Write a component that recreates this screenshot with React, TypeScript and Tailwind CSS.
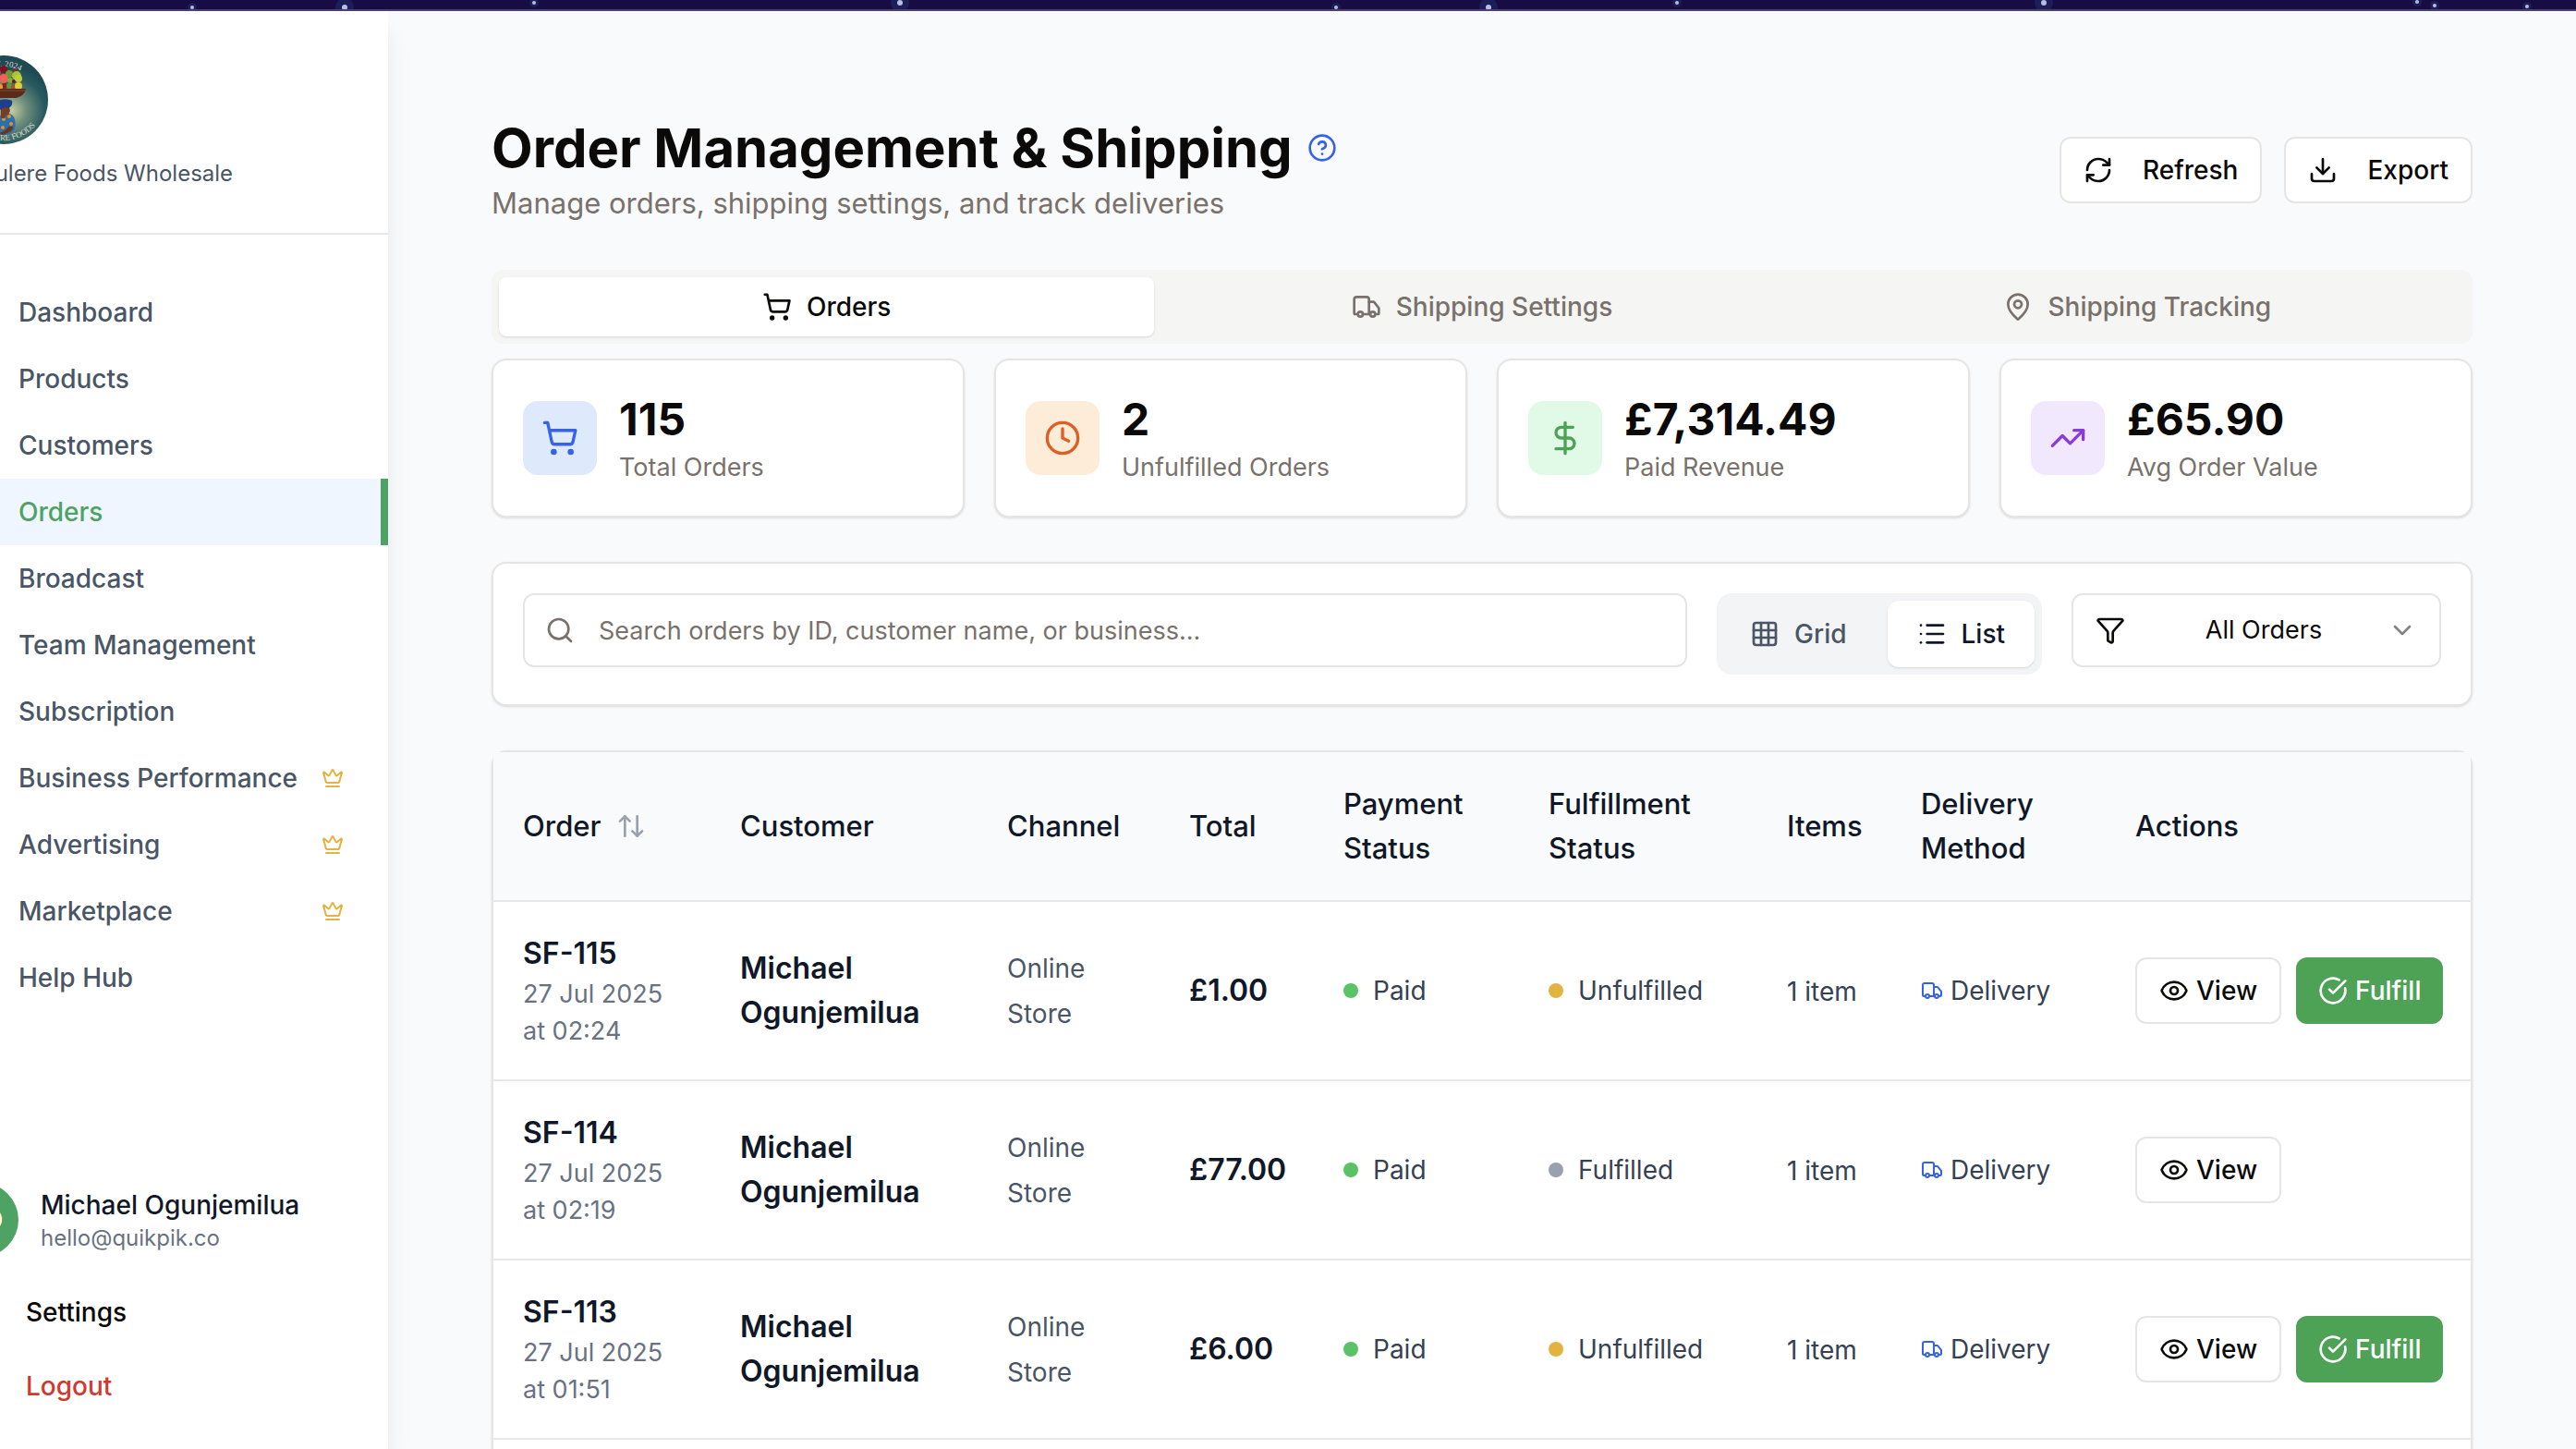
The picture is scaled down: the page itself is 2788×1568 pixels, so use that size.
import type { ReactNode } from "react";
import {
  ArrowUpDown,
  ChevronDown,
  CircleCheckBig,
  CircleHelp,
  Clock,
  Crown,
  DollarSign,
  Download,
  Eye,
  Funnel,
  Grid3x3,
  List,
  MapPin,
  RefreshCw,
  Search,
  ShoppingCart,
  TrendingUp,
  Truck,
} from "lucide-react";

const navItems = [
  { label: "Dashboard" },
  { label: "Products" },
  { label: "Customers" },
  { label: "Orders", active: true },
  { label: "Broadcast" },
  { label: "Team Management" },
  { label: "Subscription" },
  { label: "Business Performance", premium: true },
  { label: "Advertising", premium: true },
  { label: "Marketplace", premium: true },
  { label: "Help Hub" },
];

const orders = [
  { id: "SF-115", date: "27 Jul 2025", time: "02:24", total: "£1.00", fulfilled: false },
  { id: "SF-114", date: "27 Jul 2025", time: "02:19", total: "£77.00", fulfilled: true },
  { id: "SF-113", date: "27 Jul 2025", time: "01:51", total: "£6.00", fulfilled: false },
  { id: "SF-112", date: "27 Jul 2025", time: "01:40", total: "£12.00", fulfilled: false },
];

const stars = [
  [208, 8, 1],
  [373, 8, 2],
  [578, 3, 1],
  [974, 3, 2],
  [1446, 8, 1],
  [1611, 8, 2],
  [1815, 3, 1],
  [2212, 3, 2],
  [2616, 2, 1],
  [2635, 6, 1],
  [2735, 7, 1],
];

function StarStrip() {
  return (
    <div className="h-3 shrink-0 border-b-2 border-[#4d4070] bg-[#170d44]">
      <svg className="block h-full w-full" viewBox="0 0 2788 10" preserveAspectRatio="none" aria-hidden="true">
        {stars.map(([x, y, r]) => (
          <g key={x}>
            <circle cx={x} cy={y} r={r * 5} fill="#1f2f6b" opacity="0.5" />
            <circle cx={x} cy={y} r={r + 1} fill="#b9bde0" />
          </g>
        ))}
      </svg>
    </div>
  );
}

const fruits: [number, number, number, string][] = [
  [31, 33, 5, "#c8302f"],
  [38, 26, 5, "#e0a92e"],
  [42, 32, 5, "#5e9a2f"],
  [48, 15, 4, "#7d1022"],
  [41, 19, 4, "#b93a2a"],
  [54, 20, 4, "#6f9a2c"],
  [60, 16, 2, "#a3182b"],
  [62, 22, 5, "#a8c43a"],
  [48, 25, 5, "#f0605f"],
  [55, 27, 3, "#7fae3a"],
  [59, 28, 2, "#6b1626"],
  [64, 25, 4, "#c3cf3a"],
  [49, 33, 3, "#8f1a28"],
  [54, 33, 3, "#5f9a33"],
  [58, 34, 2, "#c1442b"],
  [64, 33, 4, "#e0cf35"],
  [44, 34, 3, "#e3a02c"],
];

function CompanyLogo() {
  return (
    <svg className="block size-24" viewBox="0 0 96 96" role="img" aria-label="Surulere Foods logo">
      <defs>
        <radialGradient id="logo-glow" cx="0.58" cy="0.62" r="0.5">
          <stop offset="0" stopColor="#c9cfa0" />
          <stop offset="0.35" stopColor="#6f8f7c" />
          <stop offset="0.75" stopColor="#2a5a60" />
          <stop offset="1" stopColor="#1f4a54" />
        </radialGradient>
        <path id="logo-top" d="M11 49a37 37 0 0 1 74 0" />
        <path id="logo-bottom" d="M4 48a44 44 0 0 0 88 0" />
      </defs>
      <circle cx="48" cy="48" r="48" fill="url(#logo-glow)" />
      <g fill="#d5dccb" fontFamily="Liberation Serif, serif" fontSize="9">
        <text textAnchor="middle">
          <textPath href="#logo-top" startOffset="50%">EST. 2024</textPath>
        </text>
        <text textAnchor="middle">
          <textPath href="#logo-bottom" startOffset="50%">SURULERE FOODS</textPath>
        </text>
      </g>
      {fruits.map(([x, y, r, c]) => (
        <circle key={`${x}-${y}`} cx={x} cy={y} r={r} fill={c} />
      ))}
      <path d="M23 36h49c-1 6-6 9-11 10H34c-5-1-10-4-11-10z" fill="#5a2a1c" />
      <path d="M24 38h47" stroke="#8a4a2e" strokeWidth="1" />
      <path d="M46 64c6-3 12-1 14 5 1 5 1 8-1 12l-6 5-9 0-6-4c-1-9 1-13 8-18z" fill="#2f6fa8" />
      <path d="M58 77c1 4-5 7-11 9l-4-2c5-2 9-4 10-7z" fill="#6b3620" />
      <circle cx="48" cy="69" r="2" fill="#e0912f" />
      <circle cx="54" cy="66" r="2" fill="#e0912f" />
      <circle cx="56" cy="74" r="2" fill="#e0912f" />
      <circle cx="47" cy="78" r="2" fill="#e0912f" />
      <path d="M45 56h9l1 4-2 4-3 1-1 3h-4z" fill="#7a3d22" />
      <path d="M43 49c3-2 10-2 14 0 1 4-1 7-4 8-4-1-7 0-9 2z" fill="#1d3f8c" />
    </svg>
  );
}

function Sidebar() {
  return (
    <aside className="z-10 flex w-[420px] shrink-0 justify-end overflow-x-clip bg-white shadow-[0_20px_30px_-6px_rgba(0,0,0,0.1),0_8px_12px_-8px_rgba(0,0,0,0.1)]">
      <div className="flex w-[512px] shrink-0 flex-col">
        <div className="border-b-2 border-gray-200 p-12">
          <CompanyLogo />
          <p className="mt-4 text-[24px] leading-8 text-gray-600">Surulere Foods Wholesale</p>
        </div>
        <nav className="flex-1 pt-12">
          {navItems.map((item) => (
            <a
              key={item.label}
              href="#"
              className={`flex h-[72px] items-center justify-between pl-28 text-[28px] leading-10 font-medium ${
                item.active
                  ? "border-r-8 border-[#4da264] bg-blue-50 pr-10 text-[#4da264]"
                  : "pr-12 text-gray-600"
              }`}
            >
              {item.label}
              {item.premium && <Crown className="size-6 text-[#e3b341]" />}
            </a>
          ))}
        </nav>
        <div className="p-8">
          <div className="flex items-center gap-6">
            <div className="flex size-20 items-center justify-center rounded-full bg-[#4da264] text-[28px] font-medium text-white">
              MO
            </div>
            <div>
              <p className="text-[28px] leading-10 font-medium text-gray-900">Michael Ogunjemilua</p>
              <p className="text-[24px] leading-8 text-gray-500">hello@quikpik.co</p>
            </div>
          </div>
          <div className="mt-6 flex flex-col gap-2">
            <button className="h-[72px] pl-[88px] text-left text-[28px] font-medium text-stone-950">Settings</button>
            <button className="h-[72px] pl-[88px] text-left text-[28px] font-medium text-[#cf3a30]">Logout</button>
          </div>
        </div>
      </div>
    </aside>
  );
}

function OutlineButton({ icon, children }: { icon: ReactNode; children: ReactNode }) {
  return (
    <button className="flex h-[72px] items-center gap-8 rounded-xl border-2 border-stone-200 bg-white px-6 text-[28px] font-medium text-stone-950">
      {icon}
      {children}
    </button>
  );
}

function PageHeader() {
  return (
    <header className="flex items-center justify-between">
      <div>
        <div className="flex items-center gap-4">
          <h1 className="text-[58px] leading-[72px] font-bold text-stone-950">Order Management &amp; Shipping</h1>
          <button aria-label="Help">
            <CircleHelp className="size-8 text-[#3463e6]" />
          </button>
        </div>
        <p className="text-[31px] leading-[48px] text-stone-500">
          Manage orders, shipping settings, and track deliveries
        </p>
      </div>
      <div className="flex gap-6">
        <OutlineButton icon={<RefreshCw className="size-8" />}>Refresh</OutlineButton>
        <OutlineButton icon={<Download className="size-8" />}>Export</OutlineButton>
      </div>
    </header>
  );
}

function Tabs() {
  const tab = "flex items-center justify-center gap-4 rounded-lg py-3 text-[28px] leading-10 font-medium";
  return (
    <div role="tablist" className="mt-12 grid grid-cols-3 rounded-xl bg-stone-100 p-2 text-stone-500">
      <button role="tab" aria-selected="true" className={`${tab} bg-white text-stone-950 shadow-sm`}>
        <ShoppingCart className="size-8" />
        Orders
      </button>
      <button role="tab" aria-selected="false" className={tab}>
        <Truck className="size-8" />
        Shipping Settings
      </button>
      <button role="tab" aria-selected="false" className={tab}>
        <MapPin className="size-8" />
        Shipping Tracking
      </button>
    </div>
  );
}

function StatCard({ icon, tint, value, label }: { icon: ReactNode; tint: string; value: string; label: string }) {
  return (
    <div className="flex items-center gap-6 rounded-2xl border-2 border-stone-200 bg-white p-8 shadow-sm">
      <div className={`flex size-20 items-center justify-center rounded-2xl ${tint}`}>{icon}</div>
      <div>
        <p className="text-[48px] leading-[64px] font-bold text-stone-950">{value}</p>
        <p className="text-[27px] leading-10 text-stone-500">{label}</p>
      </div>
    </div>
  );
}

function FilterBar() {
  return (
    <div className="mt-12 flex items-start gap-8 rounded-2xl border-2 border-stone-200 bg-white p-8 shadow-sm">
      <div className="relative flex-1">
        <Search className="absolute top-6 left-6 size-8 text-stone-500" />
        <input
          type="search"
          aria-label="Search orders"
          placeholder="Search orders by ID, customer name, or business..."
          className="h-20 w-full rounded-xl border-2 border-stone-200 bg-white pr-6 pl-20 text-[27px] text-stone-950 placeholder:text-stone-500"
        />
      </div>
      <div className="flex h-[88px] gap-4 rounded-2xl bg-gray-100 p-2 text-[28px] font-medium">
        <button className="flex items-center gap-4 rounded-xl px-7 text-gray-600">
          <Grid3x3 className="size-8" />
          Grid
        </button>
        <button className="flex items-center gap-4 rounded-xl bg-white px-8 text-gray-900 shadow-sm">
          <List className="size-8" />
          List
        </button>
      </div>
      <div className="relative w-[400px]">
        <Funnel className="pointer-events-none absolute top-6 left-[26px] size-8 text-stone-950" />
        <select
          aria-label="Filter orders"
          className="h-20 w-full appearance-none rounded-xl border-2 border-stone-200 bg-white pr-14 pl-[72px] text-[27px] text-stone-950 [text-align-last:center]"
        >
          <option>All Orders</option>
          <option>Unfulfilled</option>
          <option>Fulfilled</option>
        </select>
        <ChevronDown className="pointer-events-none absolute top-6 right-[26px] size-8 text-stone-950 opacity-50" />
      </div>
    </div>
  );
}

function Status({ color, children }: { color: string; children: ReactNode }) {
  return (
    <div className="flex items-center gap-4 text-[28px] leading-10 text-gray-700">
      <span className={`size-4 rounded-full ${color}`} />
      {children}
    </div>
  );
}

function OrdersTable() {
  return (
    <div className="mt-12 rounded-2xl border-2 border-stone-200 bg-white shadow-sm">
      <table className="w-full table-fixed text-left text-[32px] leading-[48px] text-gray-900">
        <colgroup>
          <col className="w-[235px]" />
          <col className="w-[289px]" />
          <col className="w-[197px]" />
          <col className="w-[167px]" />
          <col className="w-[222px]" />
          <col className="w-[258px]" />
          <col className="w-[145px]" />
          <col className="w-[232px]" />
          <col className="w-[395px]" />
        </colgroup>
        <thead className="text-[31px]">
          <tr className="border-b-2 border-gray-200 bg-gray-50 *:px-8 *:py-8 *:font-medium">
            <th>
              <button className="flex items-center gap-4">
                Order
                <ArrowUpDown className="size-8 shrink-0 text-gray-400" />
              </button>
            </th>
            <th>Customer</th>
            <th>Channel</th>
            <th>Total</th>
            <th>Payment Status</th>
            <th>Fulfillment Status</th>
            <th>Items</th>
            <th>Delivery Method</th>
            <th>Actions</th>
          </tr>
        </thead>
        <tbody>
          {orders.map((o) => (
            <tr key={o.id} className="border-b-2 border-gray-200 *:px-8 *:py-8">
              <td>
                <p className="font-semibold">{o.id}</p>
                <p className="text-[27px] leading-10 text-gray-500">
                  {o.date} at {o.time}
                </p>
              </td>
              <td className="font-semibold">Michael Ogunjemilua</td>
              <td>
                <span className="text-[28px] text-gray-600">Online Store</span>
              </td>
              <td className="font-semibold">{o.total}</td>
              <td>
                <Status color="bg-[#5bc266]">Paid</Status>
              </td>
              <td>
                <Status color={o.fulfilled ? "bg-gray-400" : "bg-[#e3b341]"}>
                  {o.fulfilled ? "Fulfilled" : "Unfulfilled"}
                </Status>
              </td>
              <td>
                <span className="text-[28px] text-gray-700">1 item</span>
              </td>
              <td>
                <div className="flex items-center gap-2 text-[28px] leading-10 text-gray-700">
                  <Truck className="size-6 text-[#3463e6]" />
                  Delivery
                </div>
              </td>
              <td>
                <div className="flex gap-4 text-[28px] font-medium">
                  <button className="flex h-[72px] items-center gap-2 rounded-xl border-2 border-stone-200 bg-white px-6 text-stone-950">
                    <Eye className="size-8" />
                    View
                  </button>
                  {!o.fulfilled && (
                    <button className="flex h-[72px] items-center gap-2 rounded-xl bg-[#4da255] px-6 text-white">
                      <CircleCheckBig className="size-8" />
                      Fulfill
                    </button>
                  )}
                </div>
              </td>
            </tr>
          ))}
        </tbody>
      </table>
    </div>
  );
}

export default function App() {
  return (
    <div className="flex h-screen flex-col overflow-hidden bg-[#f9fafc] font-[Inter,sans-serif]">
      <StarStrip />
      <div className="flex min-h-0 flex-1">
        <Sidebar />
        <main className="min-w-0 flex-1 overflow-hidden p-28">
          <PageHeader />
          <Tabs />
          <div className="mt-4 grid grid-cols-4 gap-8">
            <StatCard
              icon={<ShoppingCart className="size-10 text-[#3463e6]" />}
              tint="bg-[#dee9fc]"
              value="115"
              label="Total Orders"
            />
            <StatCard
              icon={<Clock className="size-10 text-[#dc5f26]" />}
              tint="bg-[#fdecd8]"
              value="2"
              label="Unfulfilled Orders"
            />
            <StatCard
              icon={<DollarSign className="size-10 text-[#4da255]" />}
              tint="bg-[#e0fae7]"
              value="£7,314.49"
              label="Paid Revenue"
            />
            <StatCard
              icon={<TrendingUp className="size-10 text-[#8b3bdc]" />}
              tint="bg-[#f1e8fd]"
              value="£65.90"
              label="Avg Order Value"
            />
          </div>
          <FilterBar />
          <OrdersTable />
        </main>
      </div>
    </div>
  );
}
